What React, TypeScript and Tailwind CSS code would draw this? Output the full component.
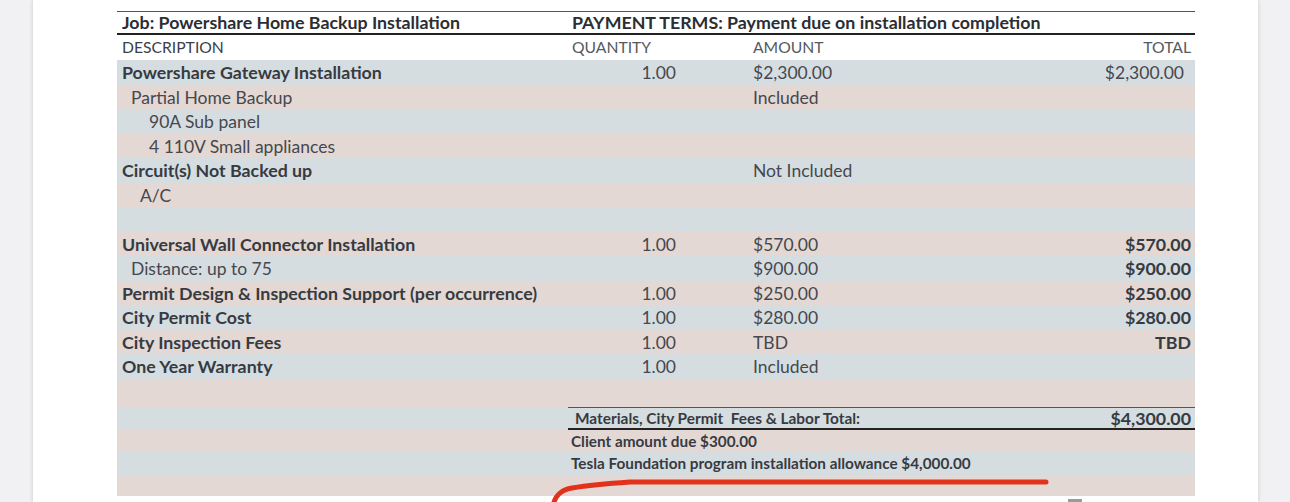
import React from "react";

const BLUE = "bg-[#d6dde1]";
const PINK = "bg-[#e4d8d4]";

type R = {
  bg: string;
  h: string;
  desc?: string;
  indent?: string;
  bold?: boolean;
  qty?: string;
  amt?: string;
  total?: string;
  totalBold?: boolean;
};

const rows: R[] = [
  { bg: BLUE, h: "h-[25px]", desc: "Powershare Gateway Installation", bold: true, qty: "1.00", amt: "$2,300.00", total: "$2,300.00" },
  { bg: PINK, h: "h-[24px]", desc: "Partial Home Backup", indent: "pl-[14px]", amt: "Included" },
  { bg: BLUE, h: "h-[25px]", desc: "90A Sub panel", indent: "pl-[32px]" },
  { bg: PINK, h: "h-[24px]", desc: "4 110V Small appliances", indent: "pl-[32px]" },
  { bg: BLUE, h: "h-[25px]", desc: "Circuit(s) Not Backed up", bold: true, amt: "Not Included" },
  { bg: PINK, h: "h-[24px]", desc: "A/C", indent: "pl-[23px]" },
  { bg: BLUE, h: "h-[25px]" },
  { bg: PINK, h: "h-[24px]", desc: "Universal Wall Connector Installation", bold: true, qty: "1.00", amt: "$570.00", total: "$570.00", totalBold: true },
  { bg: BLUE, h: "h-[25px]", desc: "Distance: up to 75", indent: "pl-[14px]", amt: "$900.00", total: "$900.00", totalBold: true },
  { bg: PINK, h: "h-[24px]", desc: "Permit Design & Inspection Support (per occurrence)", bold: true, qty: "1.00", amt: "$250.00", total: "$250.00", totalBold: true },
  { bg: BLUE, h: "h-[25px]", desc: "City Permit Cost", bold: true, qty: "1.00", amt: "$280.00", total: "$280.00", totalBold: true },
  { bg: PINK, h: "h-[24px]", desc: "City Inspection Fees", bold: true, qty: "1.00", amt: "TBD", total: "TBD", totalBold: true },
  { bg: BLUE, h: "h-[25px]", desc: "One Year Warranty", bold: true, qty: "1.00", amt: "Included" },
  { bg: PINK, h: "h-[28px]" },
];

function Row({ r }: { r: R }) {
  return (
    <div className={`grid grid-cols-[451px_112px_315px_200px] items-center pt-[1px] ${r.bg} ${r.h}`}>
      <div
        className={`${r.indent ?? "pl-[5px]"} whitespace-nowrap ${
          r.bold ? "font-bold text-[17.8px] text-[#363b42]" : "text-[#45484e]"
        }`}
      >
        {r.desc ?? ""}
      </div>
      <div className="text-right pr-[4px] text-[#45484e]">{r.qty ?? ""}</div>
      <div className="pl-[73px] text-[#45484e]">{r.amt ?? ""}</div>
      <div
        className={`text-right ${
          r.totalBold ? "pr-[4px] font-bold text-[17.8px] text-[#363b42]" : "pr-[11px] text-[#45484e]"
        }`}
      >
        {r.total ?? ""}
      </div>
    </div>
  );
}

export default function App() {
  return (
    <div
      className="relative flex w-[1290px] h-[502px] overflow-hidden bg-[#f1f1f3]"
      style={{ fontFamily: "Lato, 'Noto Sans', sans-serif" }}
    >
      <div className="w-[33px] shrink-0 bg-[#f1f1f3]" />
      <div className="relative w-[1225px] shrink-0 bg-white shadow-[0_0_4px_rgba(0,0,0,0.18)]">
        <div className="ml-[84px] mt-[11px] w-[1078px] text-[17.5px] leading-none">
          {/* Job header */}
          <div className="grid grid-cols-[451px_627px] items-center pt-[1px] h-[24px] border-t border-[#555] border-b-2 border-b-[#222] font-bold text-[17.8px] text-[#2b2e33]">
            <div className="pl-[5px] whitespace-nowrap">Job: Powershare Home Backup Installation</div>
            <div className="pl-[4px] whitespace-nowrap">PAYMENT TERMS: Payment due on installation completion</div>
          </div>
          {/* Column header */}
          <div className="grid grid-cols-[451px_112px_315px_200px] items-center pt-[1px] h-[25px] text-[15.7px] text-[#3d4046]">
            <div className="pl-[5px]">DESCRIPTION</div>
            <div className="pl-[4px] text-[#555a60]">QUANTITY</div>
            <div className="pl-[73px] text-[#555a60]">AMOUNT</div>
            <div className="text-right pr-[4px] text-[#555a60]">TOTAL</div>
          </div>
          {rows.map((r, i) => (
            <Row key={i} r={r} />
          ))}
          {/* Totals */}
          <div className={`grid grid-cols-[451px_627px] h-[23px] ${BLUE}`}>
            <div />
            <div className="flex items-center justify-between pt-[1px] border-t border-[#555] border-b-2 border-b-[#222] text-[#363b42] font-bold">
              <span className="pl-[7px] text-[15.4px] whitespace-pre">Materials, City Permit  Fees & Labor Total:</span>
              <span className="pr-[4px] text-[17.8px]">$4,300.00</span>
            </div>
          </div>
          <div className={`grid grid-cols-[451px_627px] items-center pt-[1px] h-[22px] ${PINK}`}>
            <div />
            <div className="pl-[3px] text-[15.3px] font-bold text-[#363b42]">Client amount due $300.00</div>
          </div>
          <div className={`grid grid-cols-[451px_627px] items-center pt-[1px] h-[23px] ${BLUE}`}>
            <div />
            <div className="pl-[3px] text-[15.3px] font-bold text-[#363b42] whitespace-nowrap">
              Tesla Foundation program installation allowance $4,000.00
            </div>
          </div>
          <div className={`h-[21px] ${PINK}`} />
        </div>
        <div className="absolute left-[1035px] top-[499px] w-[14px] h-[4px] bg-[#9a9a9a]" />
      </div>
      <div className="flex-1 bg-[#f1f1f3]" />
      <svg className="absolute left-0 top-0 pointer-events-none" width="1290" height="502">
        <path
          d="M553 506 C555 496 560 490 572 488 C590 485 600 484 630 482 L1046 482"
          fill="none"
          stroke="#e2321c"
          strokeWidth="5"
          strokeLinecap="round"
        />
      </svg>
    </div>
  );
}
